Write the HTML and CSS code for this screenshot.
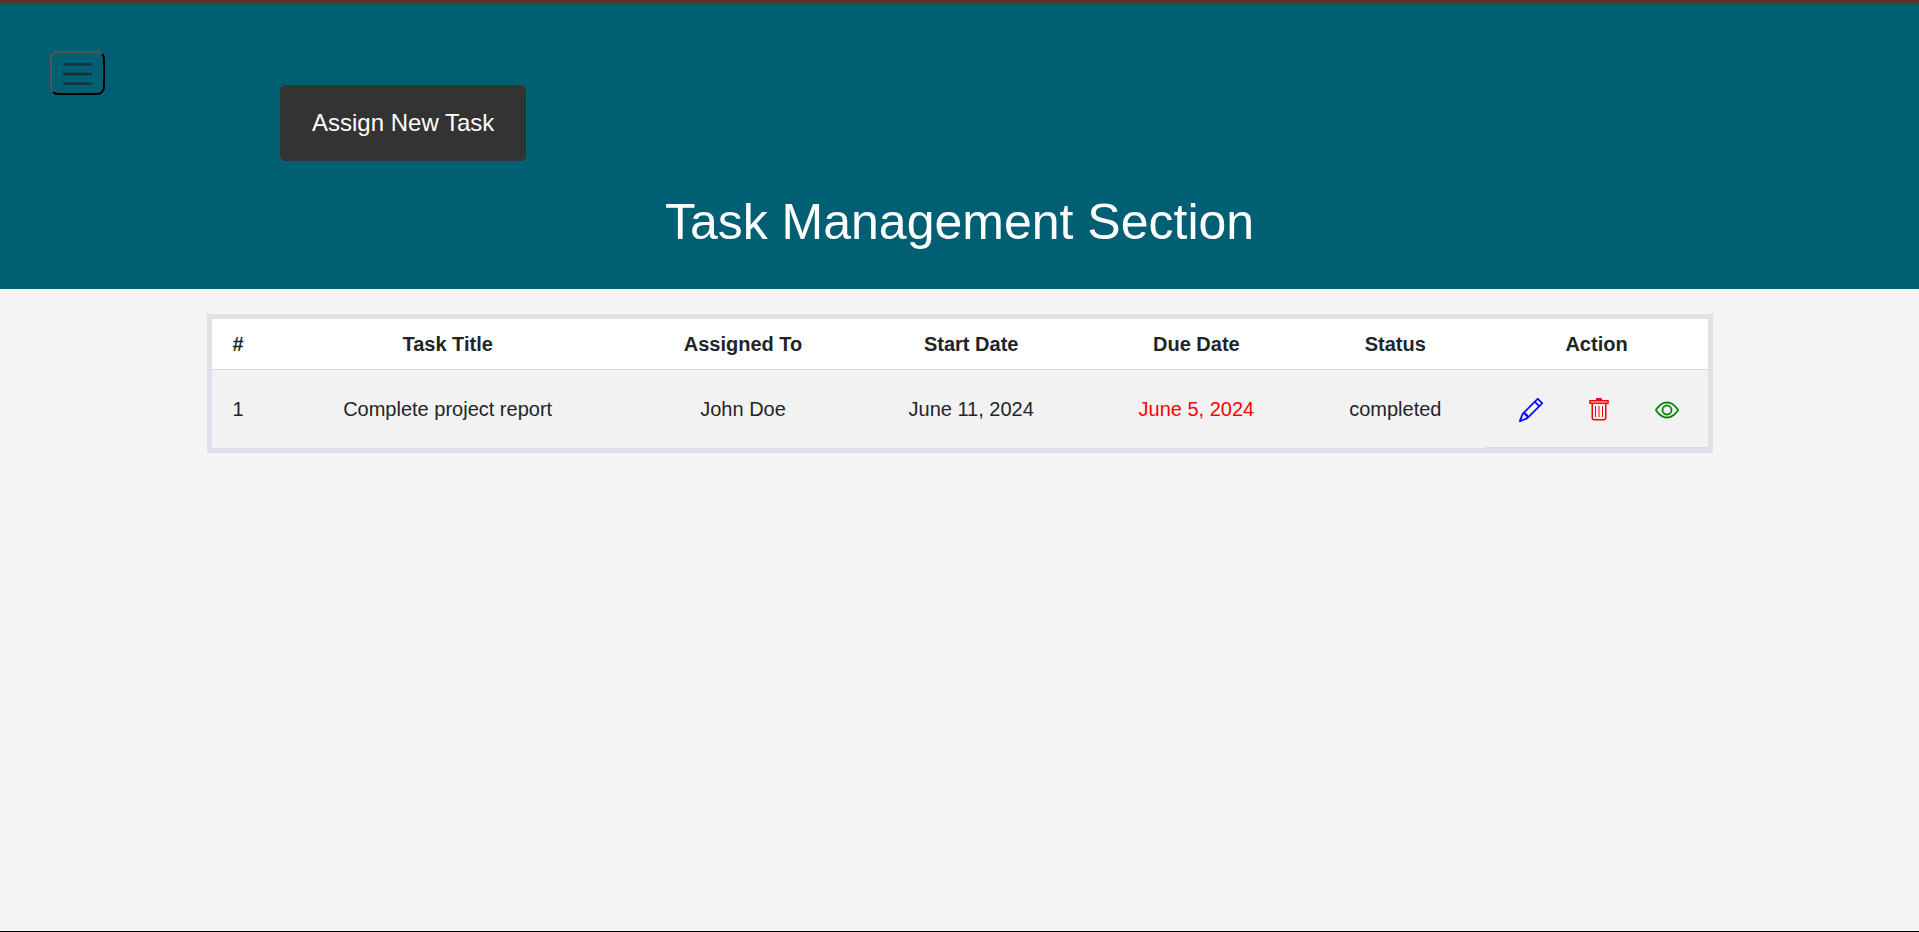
FILE: index.html
```html
<!DOCTYPE html>
<html lang="en">
<head>
<meta charset="utf-8">
<meta name="viewport" content="width=device-width, initial-scale=1">
<title>Task Management</title>
<link rel="stylesheet" href="styles.css">
</head>
<body>
<header class="masthead">
  <button class="menu-toggle" type="button" aria-label="Toggle navigation">
    <svg viewBox="0 0 30 30" aria-hidden="true"><path stroke="#212529" stroke-opacity=".85" stroke-linecap="round" stroke-miterlimit="10" stroke-width="2" d="M4 7h22M4 15h22M4 23h22"/></svg>
  </button>
  <button class="assign-button" type="button">Assign New Task</button>
  <h1 class="title">Task Management Section</h1>
</header>
<main class="content">
  <table class="tasks">
    <colgroup>
      <col class="col-number"><col class="col-task"><col class="col-person"><col class="col-start"><col class="col-due"><col class="col-status"><col class="col-action">
    </colgroup>
    <thead>
      <tr><th scope="col">#</th><th scope="col">Task Title</th><th scope="col">Assigned To</th><th scope="col">Start Date</th><th scope="col">Due Date</th><th scope="col">Status</th><th scope="col">Action</th></tr>
    </thead>
    <tbody>
      <tr>
        <td>1</td><td>Complete project report</td><td>John Doe</td><td>June 11, 2024</td><td class="overdue">June 5, 2024</td><td>completed</td>
        <td class="action-cell">
          <div class="actions">
            <button class="icon-button edit" type="button" aria-label="Edit task"><svg viewBox="0 0 16 16" aria-hidden="true"><path stroke="currentColor" stroke-width=".2" d="M12.146.146a.5.5 0 0 1 .708 0l3 3a.5.5 0 0 1 0 .708l-10 10a.5.5 0 0 1-.168.11l-5 2a.5.5 0 0 1-.65-.65l2-5a.5.5 0 0 1 .11-.168zM11.207 2.5 13.5 4.793 14.793 3.5 12.5 1.207zm1.586 3L10.5 3.207 4 9.707V10h.5a.5.5 0 0 1 .5.5v.5h.5a.5.5 0 0 1 .5.5v.5h.293zm-9.761 5.175-.106.106-1.528 3.821 3.821-1.528.106-.106A.5.5 0 0 1 5 12.5V12h-.5a.5.5 0 0 1-.5-.5V11h-.5a.5.5 0 0 1-.468-.325"/></svg></button>
            <button class="icon-button delete" type="button" aria-label="Delete task"><svg viewBox="0 0 24 24" aria-hidden="true"><path d="M9 1a1 1 0 0 1 1-1h4a1 1 0 0 1 1 1v2H9z"/><path fill="none" stroke="currentColor" stroke-width="1.5" d="M3 2.750h18v2.500H3zM5.250 5.250v14.500a2 2 0 0 0 2 2h9.500a2 2 0 0 0 2-2V5.250"/><path fill="none" stroke="currentColor" d="M8.500 8v11M12 8v11M15.500 8v11"/></svg></button>
            <button class="icon-button view" type="button" aria-label="View task"><svg viewBox="0 0 16 16" aria-hidden="true"><path stroke="currentColor" stroke-width=".2" d="M16 8s-3-5.500-8-5.500S0 8 0 8s3 5.500 8 5.500S16 8 16 8M1.173 8a13 13 0 0 1 1.660-2.043C4.120 4.668 5.880 3.500 8 3.500s3.879 1.168 5.168 2.457A13 13 0 0 1 14.828 8q-.086.130-.195.288c-.335.480-.830 1.120-1.465 1.755C11.879 11.332 10.119 12.500 8 12.500s-3.879-1.168-5.168-2.457A13 13 0 0 1 1.172 8z"/><path stroke="currentColor" stroke-width=".2" d="M8 5.500a2.500 2.500 0 1 0 0 5 2.500 2.500 0 0 0 0-5M4.500 8a3.500 3.500 0 1 1 7 0 3.500 3.500 0 0 1-7 0"/></svg></button>
          </div>
        </td>
      </tr>
    </tbody>
  </table>
</main>
</body>
</html>
```
FILE: styles.css
```css
* { box-sizing: border-box; }

body {
  margin: 0;
  min-height: 100vh;
  background: #f4f4f4;
  border-bottom: 1px solid #000;
  color: #212529;
  font-family: Arial, "Liberation Sans", sans-serif;
  font-size: 20px;
  line-height: 30px;
}

.masthead {
  display: grid;
  grid-template-columns: 230px 1fr;
  padding: 48px 50px 38px;
  background: #005f73;
  border-top: 3px solid #553628;
}

.menu-toggle {
  justify-self: start;
  align-self: start;
  display: flex;
  padding: 3px 7px 1px;
  background: transparent;
  border: 2px outset #000;
  border-radius: 8px;
}

.menu-toggle svg {
  width: 37px;
  height: 36px;
}

.assign-button {
  justify-self: start;
  margin-top: 34px;
  padding: 20px 32px;
  background: #333;
  border: 0;
  border-radius: 6px;
  color: #fff;
  font: 24px/36px Arial, "Liberation Sans", sans-serif;
}

.title {
  grid-column: 1 / -1;
  margin: 32px 0 0;
  color: #fff;
  font-size: 50px;
  font-weight: 400;
  line-height: 58px;
  text-align: center;
}

.content {
  padding: 25px 206px 25px 207px;
}

.tasks {
  width: 100%;
  table-layout: fixed;
  border: 5px solid #dee2e6;
  border-spacing: 0;
  text-align: center;
}

.tasks th {
  padding: 10px;
  background: #fff;
  border-bottom: 1px solid #d9dcdf;
}

.tasks td {
  padding: 24px 0;
  background: #f2f2f2;
}

.tasks .overdue { color: #f00; }

.tasks .action-cell {
  padding: 2px 0 0 5px;
  border-bottom: 1px solid #d9dcdf;
}

.col-number { width: 3.5%; }
.col-task { width: 24.5%; }
.col-person { width: 15%; }
.col-start { width: 15.5%; }
.col-due { width: 14.600%; }
.col-status { width: 12%; }
.col-action { width: 14.900%; }

.actions {
  display: flex;
  justify-content: center;
  gap: 36px;
}

.icon-button {
  display: flex;
  padding: 4px;
  background: transparent;
  border: 0;
}

.icon-button svg {
  width: 24px;
  height: 24px;
  fill: currentColor;
}

.edit { color: #00f; }
.delete { color: #f00; }
.view { color: #008000; }
```
